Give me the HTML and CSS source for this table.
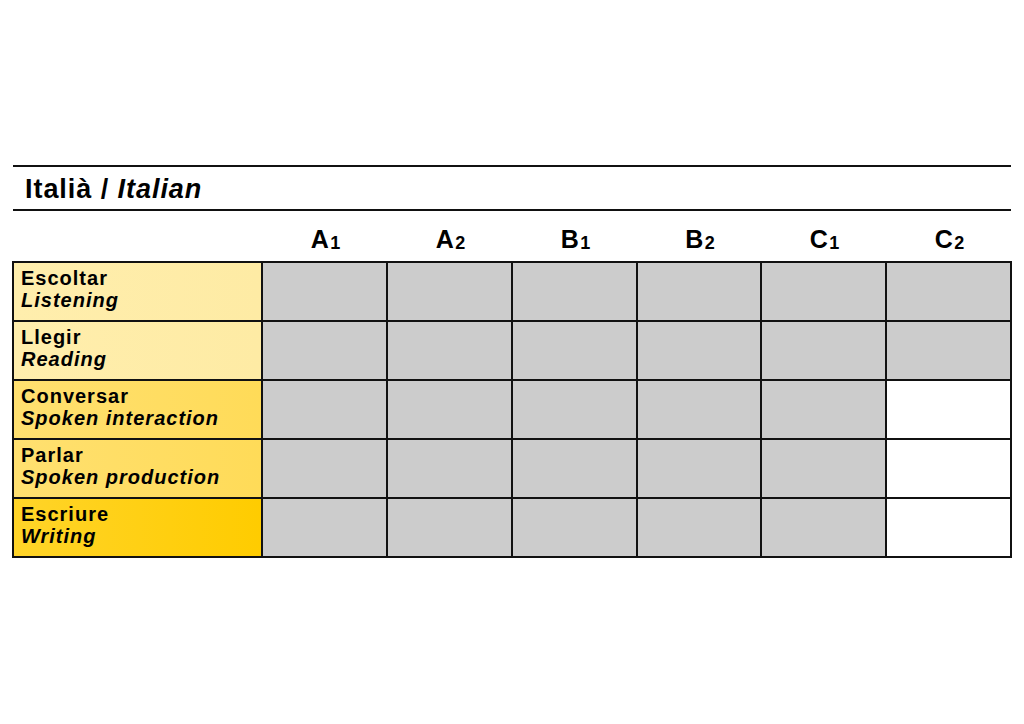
FILE: index.html
```html
<!DOCTYPE html>
<html lang="ca">
<head>
<meta charset="utf-8">
<title>Italià / Italian</title>
<link rel="stylesheet" href="styles.css">
</head>
<body>
<div class="page">
  <div class="rule"></div>
  <h1 class="title">Italià / <em>Italian</em></h1>
  <div class="rule"></div>
  <div class="levels">
    <div class="corner"></div>
    <div class="level">A<span class="sub">1</span></div>
    <div class="level">A<span class="sub">2</span></div>
    <div class="level">B<span class="sub">1</span></div>
    <div class="level">B<span class="sub">2</span></div>
    <div class="level">C<span class="sub">1</span></div>
    <div class="level">C<span class="sub">2</span></div>
  </div>
  <div class="grid">
    <div class="label light"><b>Escoltar</b><i>Listening</i></div>
    <div class="cell on"></div><div class="cell on"></div><div class="cell on"></div><div class="cell on"></div><div class="cell on"></div><div class="cell on"></div>
    <div class="label light"><b>Llegir</b><i>Reading</i></div>
    <div class="cell on"></div><div class="cell on"></div><div class="cell on"></div><div class="cell on"></div><div class="cell on"></div><div class="cell on"></div>
    <div class="label mid"><b>Conversar</b><i>Spoken interaction</i></div>
    <div class="cell on"></div><div class="cell on"></div><div class="cell on"></div><div class="cell on"></div><div class="cell on"></div><div class="cell off"></div>
    <div class="label mid"><b>Parlar</b><i>Spoken production</i></div>
    <div class="cell on"></div><div class="cell on"></div><div class="cell on"></div><div class="cell on"></div><div class="cell on"></div><div class="cell off"></div>
    <div class="label dark"><b>Escriure</b><i>Writing</i></div>
    <div class="cell on"></div><div class="cell on"></div><div class="cell on"></div><div class="cell on"></div><div class="cell on"></div><div class="cell off"></div>
  </div>
</div>
</body>
</html>
```

FILE: styles.css
```css
html, body {
  margin: 0;
  padding: 0;
  background: #ffffff;
}
body {
  font-family: "Liberation Sans", Arial, sans-serif;
  color: #000;
}
.page {
  padding-top: 165px;
  padding-left: 12px;
  width: 1000px;
}
.rule {
  height: 2px;
  background: #111;
  margin: 0 1px 0 1px;
}
.title {
  margin: 0;
  padding: 3px 0 0 13px;
  height: 39px;
  font-size: 27px;
  line-height: 39px;
  font-weight: bold;
  letter-spacing: 0.95px;
}
.title em {
  font-style: italic;
}
.levels {
  display: grid;
  grid-template-columns: 251px 125px 125px 125px 124px 125px 125px;
  height: 50px;
}
.level {
  display: flex;
  align-items: flex-end;
  justify-content: center;
  padding-bottom: 9px;
  font-size: 25px;
  line-height: 25px;
  font-weight: bold;
  letter-spacing: 1.5px;
}
.level .sub {
  font-size: 18px;
  font-weight: bold;
  line-height: 18px;
  letter-spacing: 0;
}
.grid {
  display: grid;
  grid-template-columns: 247px 123px 123px 123px 122px 123px 123px;
  grid-auto-rows: 57px;
  gap: 2px;
  padding: 2px;
  background: #111;
}
.label {
  display: flex;
  flex-direction: column;
  padding: 4px 0 0 7px;
  font-size: 20px;
  line-height: 22px;
  font-weight: bold;
  letter-spacing: 1px;
}
.label i {
  font-style: italic;
}
.light {
  background: linear-gradient(90deg, #ffeead, #feeba4);
}
.mid {
  background: linear-gradient(90deg, #ffe070, #ffdb58);
}
.dark {
  background: linear-gradient(90deg, #ffd429, #ffcc00);
}
.cell.on {
  background: #cccccc;
}
.cell.off {
  background: #ffffff;
}
```
